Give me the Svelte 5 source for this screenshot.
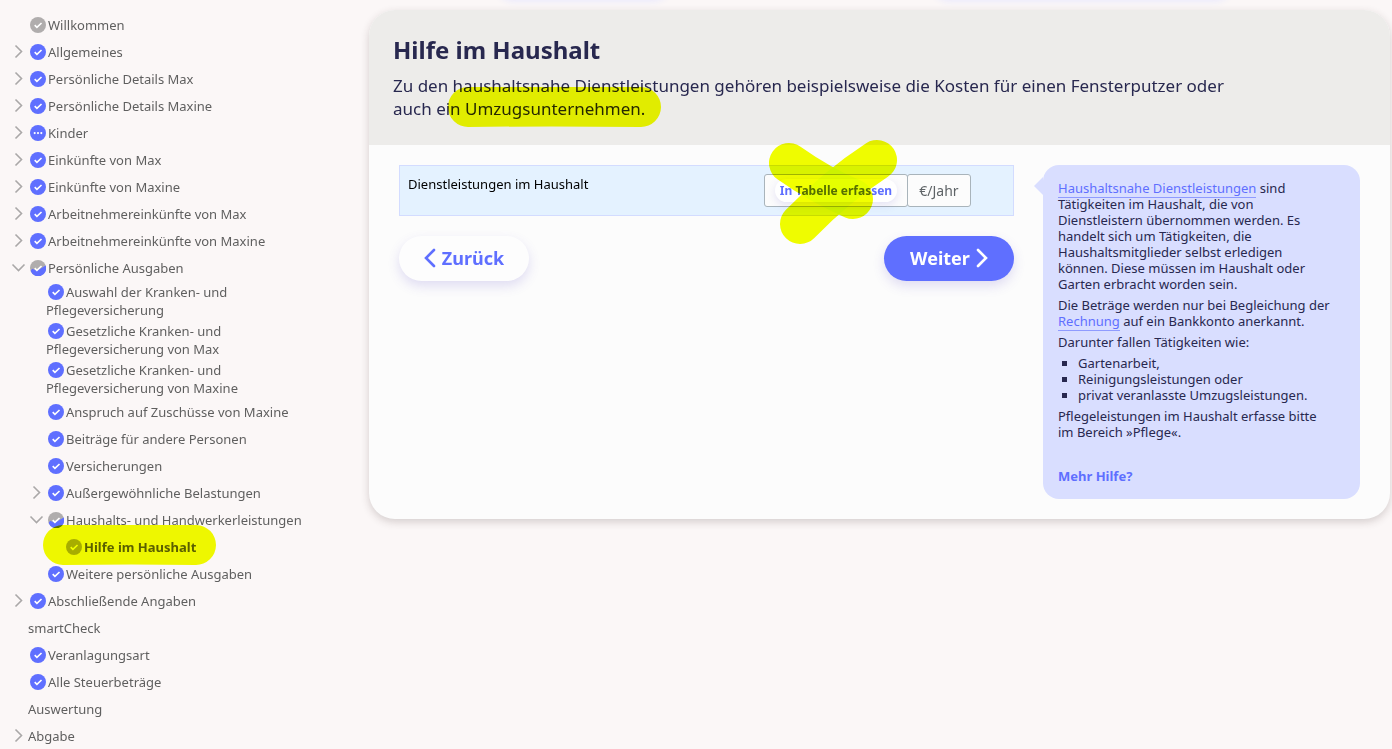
<script lang="ts">
  type Status = 'done' | 'open' | 'partial' | 'dots'
  type Item = { label: string, status?: Status, toggle?: 'closed' | 'open', active?: boolean, children?: Item[] }

  const items: Item[] = [
    { label: 'Willkommen', status: 'open' },
    { label: 'Allgemeines', status: 'done', toggle: 'closed' },
    { label: 'Persönliche Details Max', status: 'done', toggle: 'closed' },
    { label: 'Persönliche Details Maxine', status: 'done', toggle: 'closed' },
    { label: 'Kinder', status: 'dots', toggle: 'closed' },
    { label: 'Einkünfte von Max', status: 'done', toggle: 'closed' },
    { label: 'Einkünfte von Maxine', status: 'done', toggle: 'closed' },
    { label: 'Arbeitnehmereinkünfte von Max', status: 'done', toggle: 'closed' },
    { label: 'Arbeitnehmereinkünfte von Maxine', status: 'done', toggle: 'closed' },
    { label: 'Persönliche Ausgaben', status: 'partial', toggle: 'open', children: [
      { label: 'Auswahl der Kranken- und\nPflegeversicherung', status: 'done' },
      { label: 'Gesetzliche Kranken- und\nPflegeversicherung von Max', status: 'done' },
      { label: 'Gesetzliche Kranken- und\nPflegeversicherung von Maxine', status: 'done' },
      { label: 'Anspruch auf Zuschüsse von Maxine', status: 'done' },
      { label: 'Beiträge für andere Personen', status: 'done' },
      { label: 'Versicherungen', status: 'done' },
      { label: 'Außergewöhnliche Belastungen', status: 'done', toggle: 'closed' },
      { label: 'Haushalts- und Handwerkerleistungen', status: 'partial', toggle: 'open', children: [
        { label: 'Hilfe im Haushalt', status: 'open', active: true }
      ] },
      { label: 'Weitere persönliche Ausgaben', status: 'done' }
    ] },
    { label: 'Abschließende Angaben', status: 'done', toggle: 'closed' },
    { label: 'smartCheck' },
    { label: 'Veranlagungsart', status: 'done' },
    { label: 'Alle Steuerbeträge', status: 'done' },
    { label: 'Auswertung' },
    { label: 'Abgabe', toggle: 'closed' }
  ]
</script>

{#snippet icon(status: Status)}
  <svg class="status" viewBox="0 0 15 15" aria-hidden="true">
    <circle cx="7.5" cy="7.5" r="7.5" fill={status == 'open' || status == 'partial' ? '#b0adad' : '#5f6fff'} />
    {#if status == 'partial'}
      <path d="M14.7 5.2A7.5 7.5 0 0 1 .6 10.4L2 8.2 6.5 10z" fill="#5f6fff" />
    {/if}
    {#if status == 'dots'}
      <circle cx="4.4" cy="7.6" r="1" fill="#fff" />
      <circle cx="7.5" cy="7.6" r="1" fill="#fff" />
      <circle cx="10.6" cy="7.6" r="1" fill="#fff" />
    {:else}
      <path d="M4.4 7.6l2.1 2.1 4.3-4.1" fill="none" stroke="#fff" stroke-width="1.5" />
    {/if}
  </svg>
{/snippet}

{#snippet tree(nodes: Item[])}
  <ul class="tree">
    {#each nodes as node}
      <li>
        <div class="row" class:wrapped={node.label.includes('\n')}>
          {#if node.toggle}
            <button class="toggle" class:expanded={node.toggle == 'open'} aria-label={node.label} aria-expanded={node.toggle == 'open'}>
              <svg width="15" height="15" viewBox="0 0 15 15"><path d="M4.5 1.5l6 6-6 6" fill="none" stroke="#aaa8a8" stroke-width="1.6" /></svg>
            </button>
          {/if}
          <a class="label" class:active={node.active} href="#seite">{#if node.status}{@render icon(node.status)}{/if}{node.label}</a>
          {#if node.active}
            <svg class="marker marker-nav" viewBox="0 0 173 40" aria-hidden="true"><path d="M20 20Q90 19 153 20" /></svg>
          {/if}
        </div>
        {#if node.children}{@render tree(node.children)}{/if}
      </li>
    {/each}
  </ul>
{/snippet}

<div class="page">
  <nav class="sidebar">
    {@render tree(items)}
  </nav>

  <main>
    <div class="tab tab-left"></div>
    <div class="tab tab-right"></div>
    <section class="card">
      <header>
        <h1>Hilfe im Haushalt</h1>
        <p>Zu den haushaltsnahe Dienstleistungen gehören beispielsweise die Kosten für einen Fensterputzer oder<br>auch ein Umzugsunternehmen.</p>
        <svg class="marker marker-intro" viewBox="0 0 213 41" aria-hidden="true"><path d="M20 20Q100 19 193 20" /></svg>
      </header>

      <div class="content">
        <form onsubmit={(e) => e.preventDefault()}>
          <div class="field">
            <label for="erfassen">Dienstleistungen im Haushalt</label>
            <div class="group">
              <div class="input"><button id="erfassen" type="button">In Tabelle erfassen</button></div>
              <div class="unit">€/Jahr</div>
              <svg class="marker marker-cross" viewBox="0 0 130 106" aria-hidden="true">
                <path d="M21 24Q52 46 85 60" />
                <path d="M109 21Q69 47 32 85" />
              </svg>
            </div>
          </div>
          <div class="buttons">
            <button type="button" class="nav-button back">
              <svg width="12" height="20" viewBox="0 0 12 20"><path d="M10 2L2 10l8 8" fill="none" stroke="currentColor" stroke-width="2.6" stroke-linecap="round" /></svg>
              Zurück
            </button>
            <button type="submit" class="nav-button next">
              Weiter
              <svg width="12" height="20" viewBox="0 0 12 20"><path d="M2 2l8 8-8 8" fill="none" stroke="currentColor" stroke-width="2.6" stroke-linecap="round" /></svg>
            </button>
          </div>
        </form>

        <aside class="help">
          <p><a class="term" href="#dienstleistungen">Haushaltsnahe Dienstleistungen</a> sind<br>Tätigkeiten im Haushalt, die von<br>Dienstleistern übernommen werden. Es<br>handelt sich um Tätigkeiten, die<br>Haushaltsmitglieder selbst erledigen<br>können. Diese müssen im Haushalt oder<br>Garten erbracht worden sein.</p>
          <p>Die Beträge werden nur bei Begleichung der<br><a class="term" href="#rechnung">Rechnung</a> auf ein Bankkonto anerkannt.</p>
          <p>Darunter fallen Tätigkeiten wie:</p>
          <ul>
            <li>Gartenarbeit,</li>
            <li>Reinigungsleistungen oder</li>
            <li>privat veranlasste Umzugsleistungen.</li>
          </ul>
          <p>Pflegeleistungen im Haushalt erfasse bitte<br>im Bereich »Pflege«.</p>
          <a class="more" href="#hilfe">Mehr Hilfe?</a>
        </aside>
      </div>
    </section>
  </main>
</div>

<style>
  :global(body) {
    background: #fbf7f7;
    font-family: "Noto Sans", "Open Sans", sans-serif;
    font-size: 13px;
    color: #28284f;
  }

  button {
    font-family: inherit;
    border: 0;
    padding: 0;
    cursor: pointer;
  }

  a {
    text-decoration: none;
  }

  .page {
    display: flex;
    align-items: flex-start;
  }

  .sidebar {
    flex: 0 0 358px;
    padding: 11px 0 0 11px;
  }

  .tree {
    list-style: none;
    margin: 0;
    padding: 0;
  }

  .tree .tree {
    padding-left: 18px;
  }

  .row {
    position: relative;
    display: grid;
    grid-template-columns: 17px 1fr;
    align-items: center;
    height: 27px;
  }

  .row.wrapped {
    height: 39px;
  }

  .toggle {
    display: flex;
    background: none;
  }

  .toggle.expanded svg {
    transform: rotate(90deg);
  }

  .label {
    grid-column: 2;
    color: #5f5f5f;
    line-height: 18px;
    white-space: pre;
  }

  .label.active {
    font-weight: bold;
  }

  .status {
    width: 16px;
    height: 16px;
    margin: 0 2px;
    vertical-align: -3px;
  }

  .marker {
    position: absolute;
    fill: none;
    stroke: #f2ff00;
    stroke-width: 40px;
    stroke-linecap: round;
    mix-blend-mode: multiply;
    pointer-events: none;
  }

  .marker path {
    mix-blend-mode: multiply;
  }

  .marker-nav {
    left: -4px;
    top: -8px;
    width: 173px;
  }

  .marker-intro {
    left: 79px;
    top: 77px;
    width: 213px;
  }

  .marker-cross {
    left: 4px;
    top: -35px;
    width: 130px;
  }

  main {
    position: relative;
    flex: 1;
    padding: 10px 2px 20px 0;
  }

  .tab {
    position: absolute;
    top: -40px;
    height: 36px;
    border-radius: 18px;
    box-shadow: 0 4px 8px #e4e4ff;
  }

  .tab-left {
    left: 127px;
    width: 174px;
  }

  .tab-right {
    right: 160px;
    width: 300px;
  }

  .card {
    position: relative;
    border-radius: 26px;
    background: #fcfcfc;
    box-shadow: 0 3px 8px rgba(60, 40, 40, 0.2);
  }

  header {
    padding: 22px 24px 25px;
    border-radius: 26px 26px 0 0;
    background: #edecea;
  }

  h1 {
    margin: 0 0 7px;
    font-size: 24px;
    line-height: 35px;
  }

  header p {
    margin: 0;
    font-size: 17px;
    line-height: 23px;
    white-space: nowrap;
  }

  .content {
    display: grid;
    grid-template-columns: 1fr 317px;
    gap: 29px;
    padding: 20px 30px;
  }

  .field {
    display: flex;
    justify-content: space-between;
    padding: 8px 42px 8px 8px;
    border: 1px solid #d3dcff;
    background: #e4f2ff;
    color: #000;
  }

  .field label {
    line-height: 20px;
  }

  .group {
    position: relative;
    display: flex;
  }

  .input,
  .unit {
    display: flex;
    align-items: center;
    height: 31px;
    border: 1px solid #a9b4bb;
    border-radius: 3px;
    background: #fcfcfc;
  }

  .input {
    padding: 0 10px;
  }

  .input button {
    width: 122px;
    height: 23px;
    border-radius: 12px;
    background: #fff;
    box-shadow: 0 3px 8px rgba(95, 80, 200, 0.15);
    color: #5f6fff;
    font-size: 12px;
    font-weight: bold;
    white-space: nowrap;
  }

  .unit {
    justify-content: center;
    width: 62px;
    margin-left: -1px;
    color: #5f6467;
    font-size: 14px;
  }

  .buttons {
    display: flex;
    justify-content: space-between;
    margin-top: 20px;
  }

  .nav-button {
    display: flex;
    align-items: center;
    justify-content: center;
    gap: 6px;
    width: 130px;
    height: 45px;
    padding-bottom: 2px;
    border-radius: 23px;
    font-size: 18px;
    font-weight: bold;
    box-shadow: 0 5px 12px rgba(95, 80, 200, 0.18);
  }

  .back {
    background: #fdfdfd;
    color: #5f6fff;
  }

  .next {
    background: #5f6fff;
    color: #fff;
  }

  .help {
    position: relative;
    padding: 15px;
    border-radius: 16px;
    background: #d9deff;
    line-height: 16px;
    white-space: nowrap;
  }

  .help::before {
    content: "";
    position: absolute;
    left: -9px;
    top: 12px;
    border: solid transparent;
    border-width: 9px 9px 9px 0;
    border-right-color: #d9deff;
  }

  .help p {
    margin: 0 0 5px;
  }

  .help ul {
    margin: 0 0 5px;
    padding-left: 20px;
    list-style: square;
  }

  .term {
    color: #5f6fff;
    border-bottom: 1px solid #8f9bff;
  }

  .more {
    display: block;
    margin-top: 28px;
    color: #5f6fff;
    font-weight: bold;
  }
</style>
